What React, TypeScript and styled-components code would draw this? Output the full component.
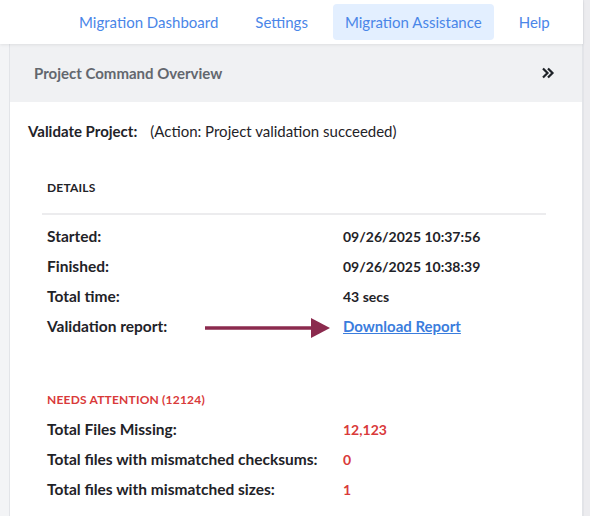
import { FC } from 'react'
import styled, { createGlobalStyle } from 'styled-components'

const GlobalStyle = createGlobalStyle`
  html, body {
    margin: 0;
    padding: 0;
    background: #f3f4f6;
    font-family: 'Lato', 'Liberation Sans', sans-serif;
    color: #1f2328;
  }
`

interface Row {
  label: string
  value: string
  link?: boolean
}

const details: Row[] = [
  { label: 'Started:', value: '09/26/2025 10:37:56' },
  { label: 'Finished:', value: '09/26/2025 10:38:39' },
  { label: 'Total time:', value: '43 secs' },
  { label: 'Validation report:', value: 'Download Report', link: true },
]

const attention: Row[] = [
  { label: 'Total Files Missing:', value: '12,123' },
  { label: 'Total files with mismatched checksums:', value: '0' },
  { label: 'Total files with mismatched sizes:', value: '1' },
]

const navItems = ['Migration Dashboard', 'Settings', 'Migration Assistance', 'Help']

const App: FC = () => {
  return (
    <>
      <GlobalStyle />
      <Shell>
        <Main>
          <Header>
            <Nav>
              {navItems.map((item) => (
                <NavItem key={item} active={item === 'Migration Assistance'}>
                  {item}
                </NavItem>
              ))}
            </Nav>
          </Header>
          <Content>
            <Card>
              <CardHeader>
                <CardTitle>Project Command Overview</CardTitle>
                <Collapse>
                  <svg width='14' height='12' viewBox='0 0 14 12'>
                    <path d='M2 1.5 L6.5 6 L2 10.5 M7 1.5 L11.5 6 L7 10.5' fill='none' stroke='#1f2328' strokeWidth='2.2' />
                  </svg>
                </Collapse>
              </CardHeader>
              <CardBody>
                <ActionLine>
                  <b>Validate Project:</b>
                  <ActionText>(Action: Project validation succeeded)</ActionText>
                </ActionLine>
                <Section>
                  <SectionTitle>DETAILS</SectionTitle>
                  <Divider />
                  <DataTable>
                    <colgroup>
                      <col style={{ width: 296 }} />
                      <col />
                    </colgroup>
                    <tbody>
                      {details.map((row) => (
                        <tr key={row.label}>
                          <Label>{row.label}</Label>
                          <Value>
                            {row.link ? (
                              <LinkCell>
                                <Arrow width='126' height='20' viewBox='0 0 126 20'>
                                  <line x1='0' y1='10' x2='108' y2='10' stroke='#8b2a4e' strokeWidth='3.5' />
                                  <polygon points='106,0 125,10 106,20' fill='#8b2a4e' />
                                </Arrow>
                                <ReportLink href='#'>{row.value}</ReportLink>
                              </LinkCell>
                            ) : (
                              row.value
                            )}
                          </Value>
                        </tr>
                      ))}
                    </tbody>
                  </DataTable>
                </Section>
                <Section>
                  <SectionTitle danger>NEEDS ATTENTION (12124)</SectionTitle>
                  <DataTable>
                    <colgroup>
                      <col style={{ width: 296 }} />
                      <col />
                    </colgroup>
                    <tbody>
                      {attention.map((row) => (
                        <tr key={row.label}>
                          <Label>{row.label}</Label>
                          <Value danger>{row.value}</Value>
                        </tr>
                      ))}
                    </tbody>
                  </DataTable>
                </Section>
              </CardBody>
            </Card>
          </Content>
        </Main>
        <Gutter />
      </Shell>
    </>
  )
}

export default App

const Shell = styled.div`
  display: flex;
  width: 590px;
  height: 516px;
  overflow: hidden;
`

const Main = styled.div`
  width: 583px;
  display: flex;
  flex-direction: column;
`

const Gutter = styled.div`
  width: 7px;
  background: #ececef;
  border-left: 1px solid #e3e4e8;
  box-sizing: border-box;
`

const Header = styled.header`
  height: 44px;
  flex-shrink: 0;
  background: #fff;
  box-shadow: 0 1px 3px rgba(0, 0, 0, 0.08);
  display: flex;
  align-items: center;
  position: relative;
  z-index: 1;
`

const Nav = styled.nav`
  display: flex;
  gap: 13px;
  padding-left: 67px;
`

const NavItem = styled.a<{ active?: boolean }>`
  font-size: 15px;
  color: #4a86e8;
  padding: 0 12px;
  height: 36px;
  line-height: 36px;
  border-radius: 4px;
  background: ${(p) => (p.active ? '#e3efff' : 'transparent')};
  cursor: pointer;
`

const Content = styled.div`
  flex: 1;
  padding: 0 0 0 9px;
`

const Card = styled.section`
  background: #fff;
  border: 1px solid #e2e4e8;
  border-top: none;
  height: 100%;
`

const CardHeader = styled.div`
  height: 58px;
  background: #f0f1f3;
  display: flex;
  align-items: center;
  justify-content: space-between;
  padding: 0 27px 0 24px;
`

const CardTitle = styled.h2`
  margin: 0;
  font-size: 15px;
  font-weight: 700;
  color: #63676e;
`

const Collapse = styled.span`
  display: flex;
  align-items: center;
`

const CardBody = styled.div`
  padding: 19px 36px 0 18px;
`

const ActionLine = styled.div`
  font-size: 15px;
  line-height: 20px;
  b {
    font-weight: 700;
  }
`

const ActionText = styled.span`
  margin-left: 13px;
`

const Section = styled.div`
  padding: 0 0 0 14px;
  margin-top: 39px;
  &:last-child {
    margin-top: 51px;
  }
`

const SectionTitle = styled.div<{ danger?: boolean }>`
  font-size: 12px;
  font-weight: 700;
  letter-spacing: 0.2px;
  color: ${(p) => (p.danger ? '#d93a3a' : '#1f2328')};
  padding-left: 5px;
  line-height: 16px;
`

const Divider = styled.div`
  height: 2px;
  background: #ececee;
  margin-top: 17px;
`

const DataTable = styled.table`
  width: 100%;
  border-collapse: collapse;
  table-layout: fixed;
  margin-top: 6px;
`

const Label = styled.td`
  font-size: 15.5px;
  font-weight: 700;
  padding: 0 5px;
  height: 30px;
  white-space: nowrap;
`

const Value = styled.td<{ danger?: boolean }>`
  font-size: 14px;
  font-weight: 700;
  padding: 0 5px;
  height: 30px;
  white-space: nowrap;
  color: ${(p) => (p.danger ? '#d93a3a' : '#1f2328')};
`

const LinkCell = styled.span`
  position: relative;
  display: inline-block;
`

const Arrow = styled.svg`
  position: absolute;
  left: -138px;
  top: 1px;
`

const ReportLink = styled.a`
  font-size: 15px;
  color: #3b7ddd;
  text-decoration: underline;
`
